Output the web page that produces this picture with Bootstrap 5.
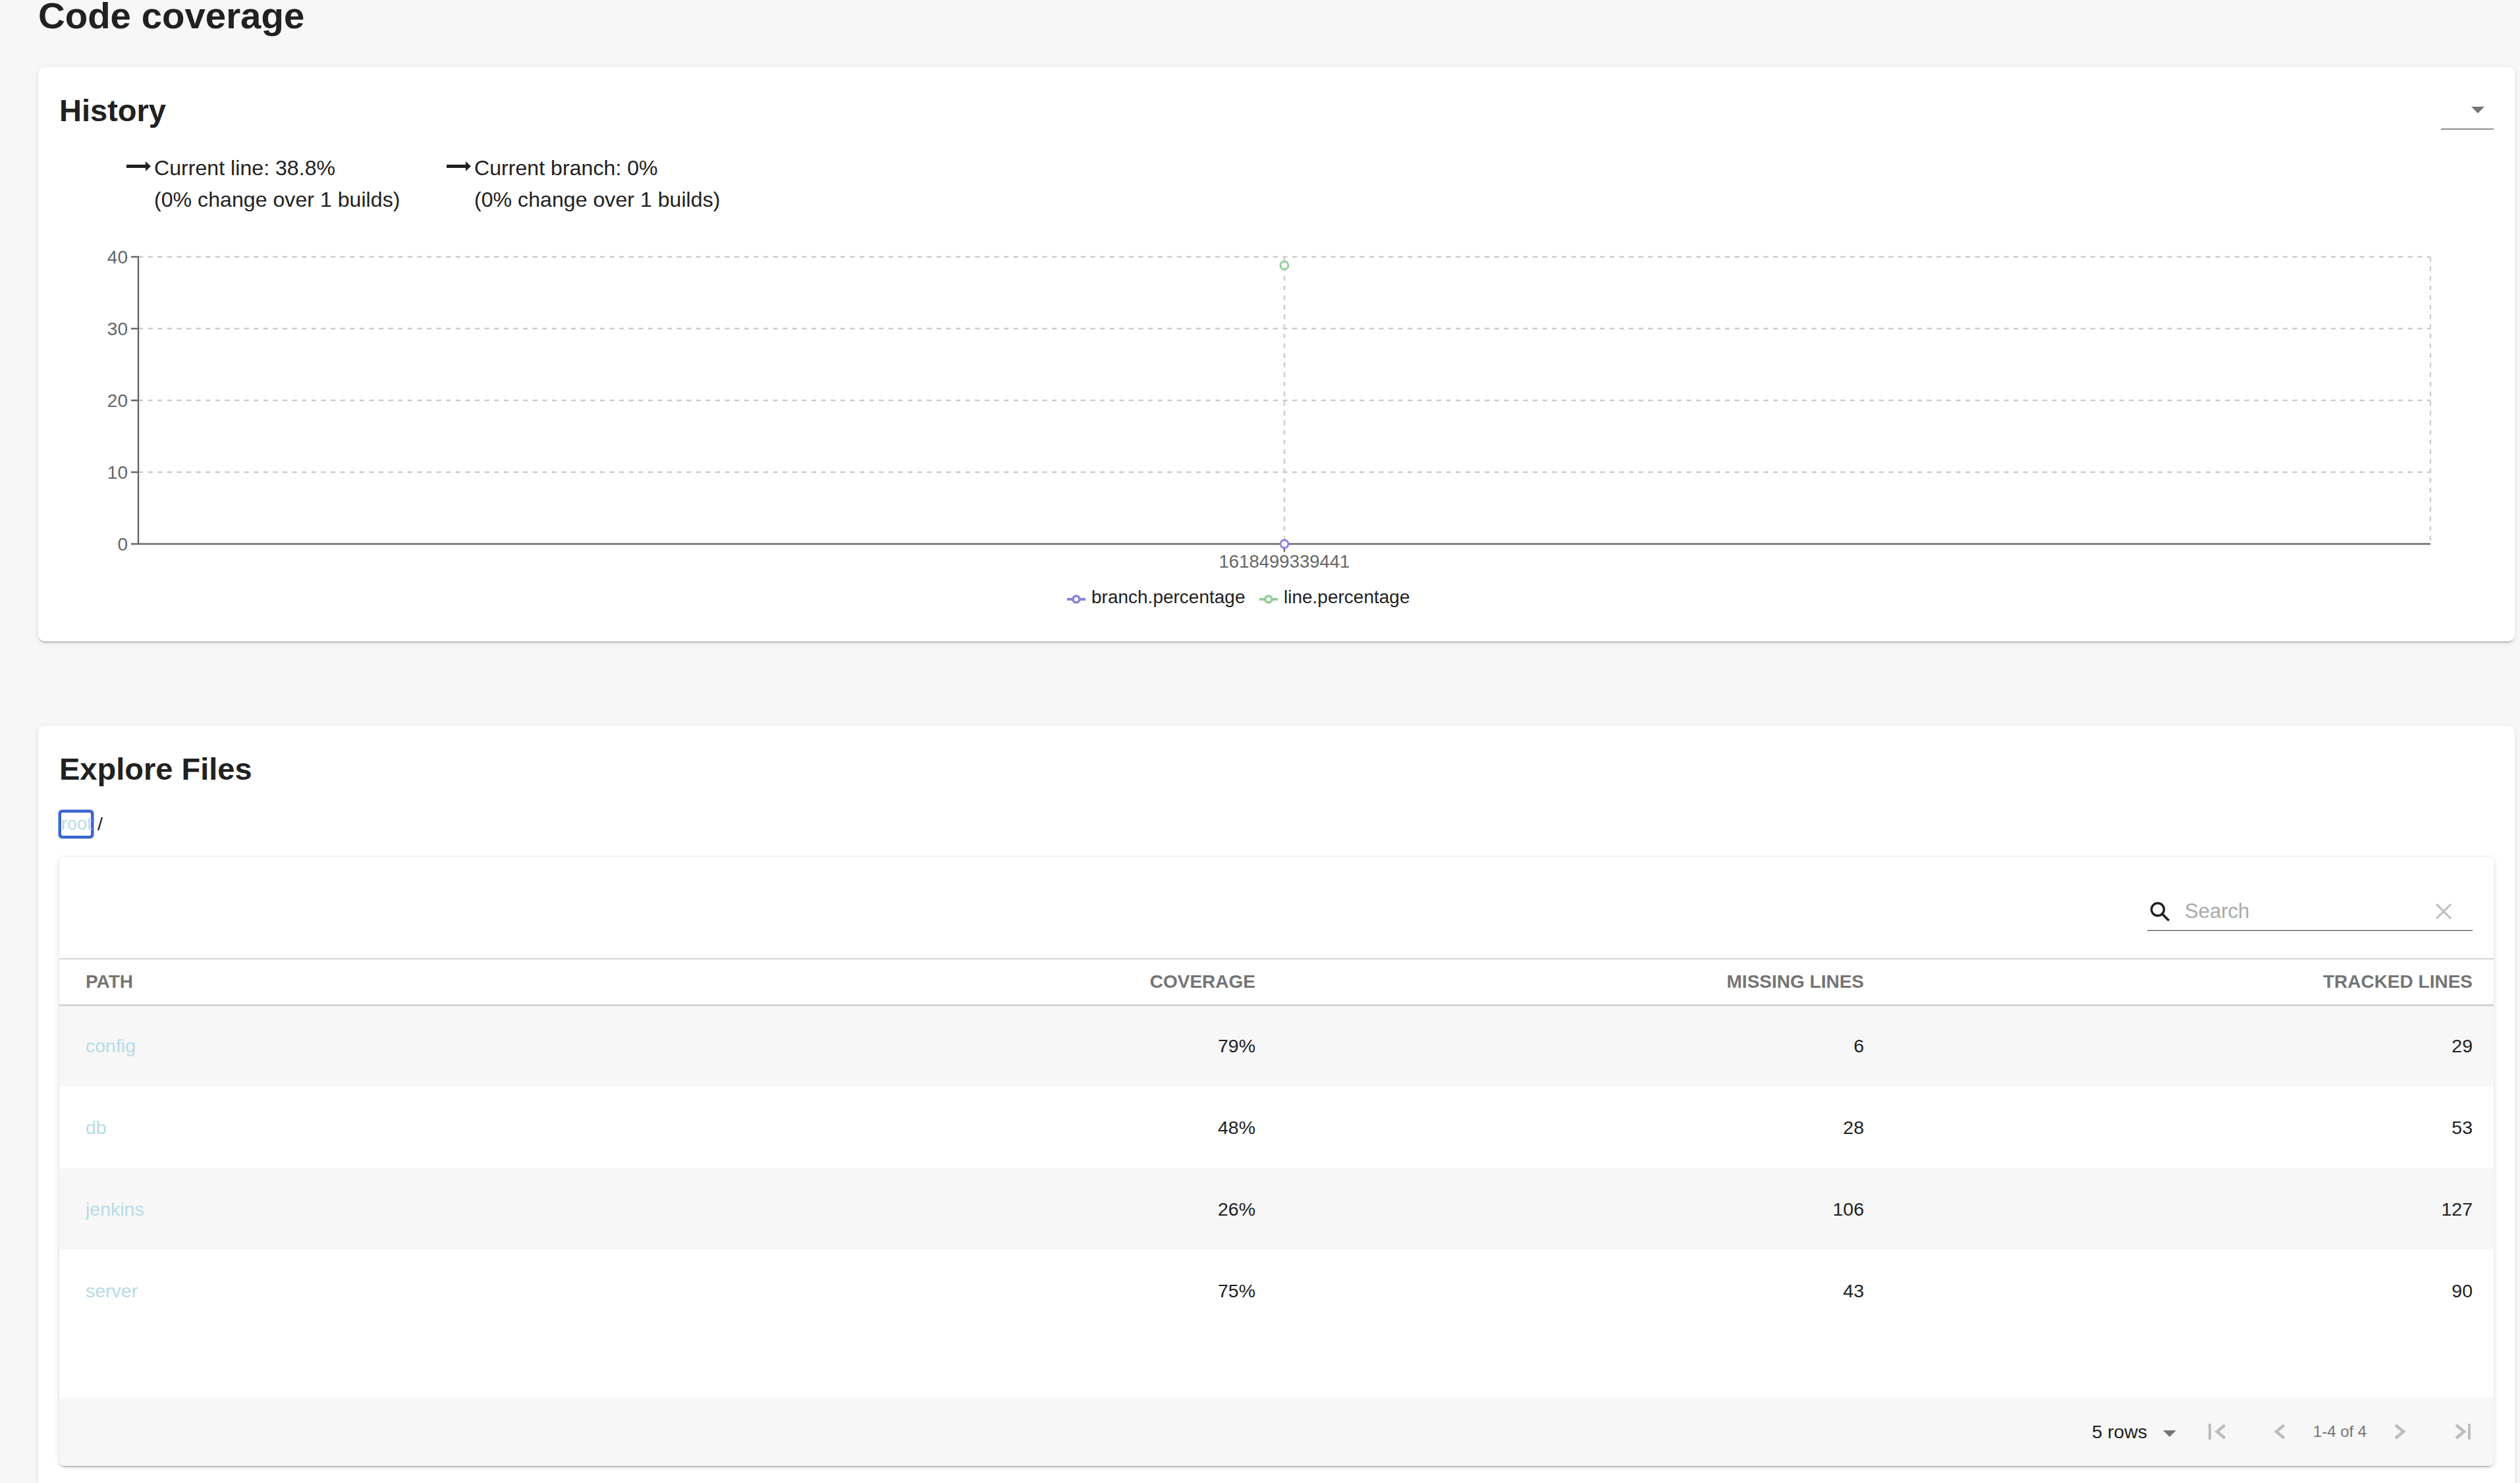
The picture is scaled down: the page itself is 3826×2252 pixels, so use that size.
<!DOCTYPE html>
<html lang="en">
<head>
<meta charset="utf-8">
<title>Code coverage</title>
<link href="https://cdn.jsdelivr.net/npm/bootstrap@5.3.0/dist/css/bootstrap.min.css" rel="stylesheet">
<script src="https://cdn.jsdelivr.net/npm/bootstrap@5.3.0/dist/js/bootstrap.bundle.min.js"></script>
<style>
html,body{height:2252px;overflow:hidden}
body{background:#f7f7f7;font-family:"Liberation Sans",Arial,sans-serif;color:#212121;font-size:28.5px}
.cov-page{padding:0 8px 0 58px}
.cov-title{font-size:56.400px;font-weight:700;line-height:47px;height:102px;margin:0;color:#212121}
.cov-card{border:0;border-radius:10px;background:#fff;box-shadow:0 3px 3px -2px rgba(0,0,0,.35),0 2px 8px rgba(0,0,0,.1)}
.cov-card-one{height:872px;margin-bottom:128px}
.cov-card-two{height:1150px;padding:0 32px;border-bottom-left-radius:0;border-bottom-right-radius:0}
.cov-head{padding:0 32px;height:100px}
.cov-h2{font-size:47px;font-weight:700;line-height:1;margin:0;color:#212121}
.cov-head .cov-h2{padding-top:42px}
.cov-select{width:80px;height:95px;border-bottom:2px solid #8f8f8f;position:relative}
.cov-caret{width:0;height:0;border-left:10px solid transparent;border-right:10px solid transparent;border-top:10px solid #757575;display:block}
.cov-select .cov-caret{position:absolute;left:46px;top:60px}
.cov-stats{padding-left:134px;height:168px;padding-top:29px;font-size:32.150px;line-height:48px}
.cov-stat{width:486px;flex:none}
.cov-stat-icon{width:42px;height:48px;flex:none;display:block;margin-top:-1px}
.cov-stat-text{white-space:nowrap}
.cov-chart{display:block;width:3760px;height:600px}
.cov-chart text{font-family:"Liberation Sans",Arial,sans-serif}
.cov-explore{height:200px;padding-top:42px}
.cov-crumb{margin-top:39px;line-height:43px;font-size:28.5px;height:43px;padding-left:3px;color:#212121}
.cov-root{display:inline-block;width:45px;height:35px;line-height:35px;box-shadow:0 0 0 4.500px #3a66cf;border-radius:2px;text-decoration:none;color:#b8dae9;vertical-align:top;margin:4px 2px 0 0;white-space:nowrap;font-size:27px;background:#fff}
.cov-inner{height:924px;border-radius:8px;background:#fff;box-shadow:0 3px 3px -2px rgba(0,0,0,.4),0 1px 8px rgba(0,0,0,.14);overflow:hidden;border:0}
.cov-toolbar{height:153px;padding-right:32px}
.cov-search{width:494px;height:58px;border-bottom:2px solid #8f8f8f;padding:0 32px 0 4px;margin-top:54px;gap:23px}
.cov-search-text{color:#aaa;font-size:31px;line-height:34px;flex:1}
.cov-table{table-layout:fixed;width:100%;margin:0;--bs-table-bg:transparent;border-collapse:collapse}
.cov-table th{font-size:28px;font-weight:700;color:#757575;height:70px;padding:0 32px 0 40px;border-top:2px solid #d4d4d4;border-bottom:3px solid #d4d4d4;vertical-align:middle;text-transform:uppercase;box-shadow:none}
.cov-table td{height:124px;padding:0 32px 0 40px;font-size:28.5px;color:#212121;vertical-align:middle;border:0;box-shadow:none}
.cov-table tbody tr:nth-child(odd) td{background:#f7f7f7}
.cov-table a{color:#b8dae9;text-decoration:none}
.cov-spacer{height:100px}
.cov-foot{height:104px;background:#f7f7f7;padding-right:35px}
.cov-rows{font-size:28.5px;color:#212121}
.cov-foot .cov-caret{margin-left:24px;margin-right:49px;margin-top:5px}
.cov-pager-ico{display:block;flex:none}
.cov-pager-gap-prev{margin-left:73px}
.cov-pager-gap-last{margin-left:75px}
.cov-range{font-size:24px;color:#757575;width:83px;text-align:center;margin:0 41px}
</style>
</head>
<body>
<main class="cov-page">
  <h1 class="cov-title">Code coverage</h1>

  <section class="card cov-card cov-card-one">
    <div class="d-flex justify-content-between cov-head">
      <h2 class="cov-h2">History</h2>
      <div class="cov-select"><span class="cov-caret"></span></div>
    </div>
    <div class="d-flex cov-stats">
      <div class="d-flex cov-stat">
        <svg class="cov-stat-icon" viewBox="0 0 42 48"><path d="M0 20h30v5H0z" fill="#212121"/><path d="M29 15l8 7.500-8 7.500z" fill="#212121"/></svg>
        <div class="cov-stat-text">Current line: 38.8%<br>(0% change over 1 builds)</div>
      </div>
      <div class="d-flex cov-stat">
        <svg class="cov-stat-icon" viewBox="0 0 42 48"><path d="M0 20h30v5H0z" fill="#212121"/><path d="M29 15l8 7.500-8 7.500z" fill="#212121"/></svg>
        <div class="cov-stat-text">Current branch: 0%<br>(0% change over 1 builds)</div>
      </div>
    </div>
    <svg class="cov-chart" viewBox="58 370 3760 600">
      <g stroke="#ccc" stroke-width="2.400" stroke-dasharray="7.300 7.300" fill="none">
        <path d="M210 390H3690M210 499H3690M210 608H3690M210 717H3690M3690 390V826M1950 390V826"/>
      </g>
      <g stroke="#666" stroke-width="2.400" fill="none">
        <path d="M210 389V826H3690M199 390H210M199 499H210M199 608H210M199 717H210M199 826H210M1950 826V838"/>
      </g>
      <g font-size="28" fill="#666" text-anchor="end">
        <text x="194" y="400">40</text>
        <text x="194" y="509">30</text>
        <text x="194" y="618">20</text>
        <text x="194" y="727">10</text>
        <text x="194" y="836">0</text>
      </g>
      <text x="1950" y="862" font-size="27.500" fill="#666" text-anchor="middle">1618499339441</text>
      <circle cx="1950" cy="403" r="6" fill="#fff" stroke="#95cc9b" stroke-width="2.800"/>
      <circle cx="1950" cy="826" r="6" fill="#fff" stroke="#8884d8" stroke-width="2.800"/>
      <path d="M1620 910H1648" stroke="#8884d8" stroke-width="4"/>
      <circle cx="1634" cy="910" r="5" fill="#fff" stroke="#8884d8" stroke-width="3.600"/>
      <text x="1657" y="916" font-size="28" fill="#212121">branch.percentage</text>
      <path d="M1912 910H1940" stroke="#95cc9b" stroke-width="4"/>
      <circle cx="1926" cy="910" r="5" fill="#fff" stroke="#95cc9b" stroke-width="3.600"/>
      <text x="1949" y="916" font-size="28" fill="#212121">line.percentage</text>
    </svg>
  </section>

  <section class="card cov-card cov-card-two">
    <div class="cov-explore">
      <h2 class="cov-h2">Explore Files</h2>
      <div class="cov-crumb"><a class="cov-root" href="#">root</a> /</div>
    </div>
    <div class="card cov-inner">
      <div class="d-flex justify-content-end cov-toolbar">
        <div class="d-flex align-items-center cov-search">
          <svg width="30" height="30" viewBox="0 0 30 30"><circle cx="12" cy="12" r="9.500" fill="none" stroke="#212121" stroke-width="3.400"/><path d="M19 19l10 10" stroke="#212121" stroke-width="3.600"/></svg>
          <span class="cov-search-text">Search</span>
          <svg width="24" height="24" viewBox="0 0 24 24"><path d="M1 1l22 22M23 1L1 23" stroke="#bdbdbd" stroke-width="3" fill="none"/></svg>
        </div>
      </div>
      <table class="table cov-table">
        <thead>
          <tr><th>Path</th><th class="text-end">Coverage</th><th class="text-end">Missing lines</th><th class="text-end">Tracked lines</th></tr>
        </thead>
        <tbody>
          <tr><td><a href="#">config</a></td><td class="text-end">79%</td><td class="text-end">6</td><td class="text-end">29</td></tr>
          <tr><td><a href="#">db</a></td><td class="text-end">48%</td><td class="text-end">28</td><td class="text-end">53</td></tr>
          <tr><td><a href="#">jenkins</a></td><td class="text-end">26%</td><td class="text-end">106</td><td class="text-end">127</td></tr>
          <tr><td><a href="#">server</a></td><td class="text-end">75%</td><td class="text-end">43</td><td class="text-end">90</td></tr>
        </tbody>
      </table>
      <div class="cov-spacer"></div>
      <div class="d-flex justify-content-end align-items-center cov-foot">
        <span class="cov-rows">5 rows</span>
        <span class="cov-caret"></span>
        <svg class="cov-pager-ico" width="27" height="24" viewBox="0 0 27 24"><path d="M2 0v24" stroke="#bdbdbd" stroke-width="4" fill="none"/><path d="M25 2L13 12l12 10" stroke="#bdbdbd" stroke-width="4.500" fill="none"/></svg>
        <svg class="cov-pager-ico cov-pager-gap-prev" width="17" height="24" viewBox="0 0 17 24"><path d="M15 2L3 12l12 10" stroke="#bdbdbd" stroke-width="4.500" fill="none"/></svg>
        <span class="cov-range">1-4 of 4</span>
        <svg class="cov-pager-ico" width="17" height="24" viewBox="0 0 17 24"><path d="M2 2l12 10L2 22" stroke="#bdbdbd" stroke-width="4.500" fill="none"/></svg>
        <svg class="cov-pager-ico cov-pager-gap-last" width="24" height="24" viewBox="0 0 24 24"><path d="M2 2l12 10L2 22" stroke="#bdbdbd" stroke-width="4.500" fill="none"/><path d="M22 0v24" stroke="#bdbdbd" stroke-width="4" fill="none"/></svg>
      </div>
    </div>
  </section>
</main>
</body>
</html>
